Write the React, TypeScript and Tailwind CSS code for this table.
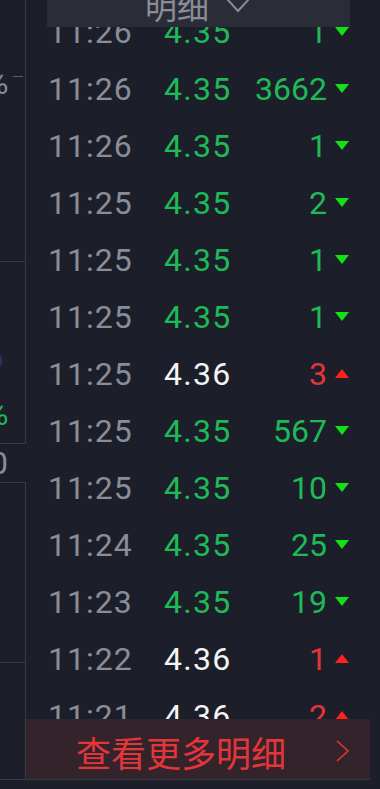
import React from "react";

type Tick = { t: string; p: string; v: string; up: boolean };

const ticks: Tick[] = [
  { t: "11:26", p: "4.35", v: "1", up: false },
  { t: "11:26", p: "4.35", v: "3662", up: false },
  { t: "11:26", p: "4.35", v: "1", up: false },
  { t: "11:25", p: "4.35", v: "2", up: false },
  { t: "11:25", p: "4.35", v: "1", up: false },
  { t: "11:25", p: "4.35", v: "1", up: false },
  { t: "11:25", p: "4.36", v: "3", up: true },
  { t: "11:25", p: "4.35", v: "567", up: false },
  { t: "11:25", p: "4.35", v: "10", up: false },
  { t: "11:24", p: "4.35", v: "25", up: false },
  { t: "11:23", p: "4.35", v: "19", up: false },
  { t: "11:22", p: "4.36", v: "1", up: true },
  { t: "11:21", p: "4.36", v: "2", up: true },
];

const num = { fontFamily: "Roboto, 'Liberation Sans', sans-serif" };
const cjk = { fontFamily: "'Noto Sans CJK SC', 'Noto Sans', sans-serif" };

function Arrow({ up }: { up: boolean }) {
  return (
    <svg width="14" height="9" viewBox="0 0 14 9" className="ml-[8px] shrink-0">
      {up ? (
        <polygon points="7,0 14,9 0,9" fill="#ff2020" />
      ) : (
        <polygon points="0,0 14,0 7,9" fill="#14e016" />
      )}
    </svg>
  );
}

function Row({ tick }: { tick: Tick }) {
  return (
    <div className="h-[57px] flex items-center pl-[22px] pr-[31px] text-[32px] leading-none" style={num}>
      <span className="w-[116px] text-[#8a8d97] tracking-[1px]">{tick.t}</span>
      <span className={tick.up ? "w-[90px] text-[#f4f4f4] tracking-[1.3px]" : "w-[90px] text-[#1fba58] tracking-[1.3px]"}>
        {tick.p}
      </span>
      <span className={tick.up ? "flex-1 text-right text-[#e3353a]" : "flex-1 text-right text-[#1fba58]"}>{tick.v}</span>
      <Arrow up={tick.up} />
    </div>
  );
}

export default function App() {
  return (
    <div className="w-[380px] h-[789px] bg-[#1c1f29] flex flex-col overflow-hidden text-[32px] leading-none">
      <div className="flex h-[779px]">
        {/* left strip (clipped panel) */}
        <div className="w-[26px] shrink-0 flex flex-col overflow-hidden" style={num}>
          <div className="h-[262px] border-r border-b border-[#363a47] flex flex-col">
            <div className="mt-[67px] flex items-center">
              <span className="ml-[-15px] text-[#8a8d97]">%</span>
              <span className="ml-[5px] w-[10px] h-px bg-[#5b5f6a] mt-[-14px]" />
            </div>
          </div>
          <div className="h-[182px] border-r border-b border-[#363a47] flex flex-col">
            <div className="mt-[88px] ml-[-20px] w-[22px] h-[22px] rounded-full bg-[#263766]" />
            <span className="mt-[26px] ml-[-15px] text-[#1fba58]">%</span>
          </div>
          <div className="h-[38px] flex items-center">
            <span className="ml-[-10px] text-[#8a8d97]">0</span>
          </div>
          <div className="h-[181px] border-r border-b border-t border-[#363a47]" />
          <div className="flex-1 border-r border-[#363a47]" />
        </div>

        {/* tick list */}
        <div className="relative flex-1 overflow-hidden">
          <div className="pt-[3px]">
            {ticks.map((tk, i) => (
              <Row key={i} tick={tk} />
            ))}
          </div>

          <div className="absolute top-0 left-[21px] w-[303px] h-[27px] bg-[#2a2d37] flex items-start justify-center overflow-hidden">
            <span className="mt-[-11px] text-[32px] text-[#8a8d97]" style={cjk}>
              明细
            </span>
            <svg width="26" height="14" viewBox="0 0 26 14" className="ml-[17px]">
              <polyline points="1,-1 12,11 23,-1" fill="none" stroke="#8a8d97" strokeWidth="2" />
            </svg>
          </div>

          <div className="absolute bottom-0 left-0 w-[344px] h-[60px] bg-[#33232a] flex items-center pl-[50px]">
            <span className="text-[35px] text-[#e3353a] leading-none mt-[4px]" style={cjk}>
              查看更多明细
            </span>
            <svg width="16" height="22" viewBox="0 0 16 22" className="ml-auto mr-[19px] mt-[4px]">
              <polyline points="2,1 13,11 2,21" fill="none" stroke="#e3353a" strokeWidth="1.6" />
            </svg>
          </div>
        </div>
      </div>
      <div className="w-[370px] h-px bg-[#363a47]" />
    </div>
  );
}
